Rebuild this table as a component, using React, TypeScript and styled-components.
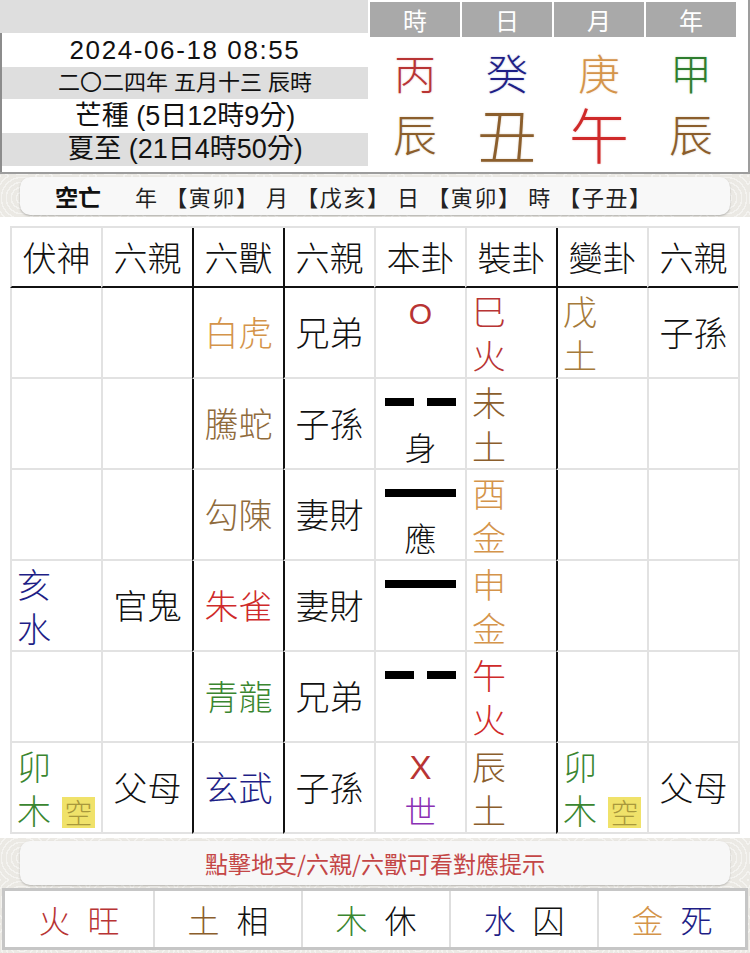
import React from "react";
import styled, { createGlobalStyle } from "styled-components";

const C = {
  fire: "#b83434",
  fireBright: "#cf2a2a",
  earth: "#8b5e2c",
  metal: "#d4944a",
  wood: "#3a8630",
  water: "#1e1e86",
  tan: "#8f6b3c",
  earth2: "#a57a3a",
  purple: "#8a30b4",
  ink: "#111",
};

const texture = `
  background-color: #ebe9e4;
  background-image:
    repeating-radial-gradient(circle at 22px 22px, rgba(255,255,255,0.45) 0 1.5px, transparent 1.5px 5px);
  background-size: 44px 44px;
`;

const GlobalStyle = createGlobalStyle`
  * { box-sizing: border-box; }
  html, body { margin: 0; padding: 0; }
  body {
    ${texture}
    font-family: "Liberation Sans", "Noto Sans CJK TC", sans-serif;
    color: ${C.ink};
  }
`;

const Page = styled.div`
  width: 750px;
  height: 953px;
  overflow: hidden;
  ${texture}
`;

/* ---------- top section ---------- */
const Top = styled.section`
  display: flex;
  height: 174px;
  background: #fff;
  border-bottom: 2px solid #9d9d9d;
`;

const DatePanel = styled.div`
  width: 368px;
  display: flex;
  flex-direction: column;
`;

const DateCap = styled.div`
  height: 33px;
  background: #dedede;
`;

const DateBody = styled.div`
  flex: 1;
  border-left: 2px solid #8c8c8c;
  display: flex;
  flex-direction: column;
`;

const DateRow = styled.div<{ $grey?: boolean; $h: number; $size: number; $ls?: number }>`
  height: ${(p) => p.$h}px;
  background: ${(p) => (p.$grey ? "#dedede" : "#fff")};
  display: flex;
  align-items: center;
  justify-content: center;
  font-size: ${(p) => p.$size}px;
  letter-spacing: ${(p) => p.$ls ?? 0}px;
  line-height: 1;
  color: #111;
  white-space: nowrap;
`;

const PillarPanel = styled.div`
  flex: 1;
  border-right: 2px solid #9d9d9d;
  padding: 2px 0 0 2px;
  display: flex;
  flex-direction: column;
`;

const PillarGrid = styled.div<{ $h: number; $mt?: number }>`
  display: grid;
  grid-template-columns: repeat(4, 90px);
  grid-template-rows: ${(p) => p.$h}px;
  column-gap: 2px;
  height: ${(p) => p.$h}px;
  margin-top: ${(p) => p.$mt ?? 0}px;
`;

const HeadCell = styled.div`
  background: #a9a9a9;
  color: #fff;
  font-family: "Noto Sans CJK TC", sans-serif;
  font-size: 24px;
  line-height: 1;
  display: flex;
  align-items: center;
  justify-content: center;
`;

const BigChar = styled.div<{ $color: string; $size: number }>`
  display: flex;
  align-items: center;
  justify-content: center;
  font-family: "Noto Sans CJK TC", sans-serif;
  font-weight: 300;
  font-size: ${(p) => p.$size}px;
  line-height: 1;
  color: ${(p) => p.$color};
  text-shadow: 0 0 2px ${(p) => p.$color}55;
`;

/* ---------- kongwang bar ---------- */
const BarWrap = styled.div<{ $pt: number; $pb: number }>`
  padding: ${(p) => p.$pt}px 20px ${(p) => p.$pb}px;
`;

const KongBar = styled.div`
  height: 38px;
  border-radius: 10px;
  background: #f8f8f8;
  box-shadow: 0 1px 2px rgba(0, 0, 0, 0.25);
  display: flex;
  align-items: center;
  padding-left: 35px;
  font-family: "Noto Sans CJK TC", sans-serif;
  font-size: 22px;
  color: #222;
  white-space: pre;
`;

const KongLabel = styled.span`
  font-weight: 700;
  font-size: 23px;
  color: #111;
  margin-right: 34px;
`;

const KongText = styled.span`
  letter-spacing: 1.6px;
`;

/* ---------- table ---------- */
const TableWrap = styled.div`
  background: #fff;
  padding: 9px 10px 4px 10px;
`;

const Grid = styled.div`
  display: grid;
  grid-template-columns: repeat(8, 91px);
  grid-template-rows: 60px repeat(6, 91px);
  border-top: 2px solid #e2e2e2;
  border-right: 2px solid #e2e2e2;
  font-family: "Noto Sans CJK TC", sans-serif;
  font-weight: 300;
`;

const Cell = styled.div<{ $dark?: boolean; $head?: boolean }>`
  border-left: 2px solid ${(p) => (p.$dark ? "#111" : "#e2e2e2")};
  border-bottom: 2px solid ${(p) => (p.$head ? "#111" : "#e2e2e2")};
  display: flex;
  align-items: center;
  justify-content: center;
  font-size: 34px;
  line-height: 1.2;
  color: #111;
  white-space: nowrap;
`;

const TextCell = styled(Cell)<{ $color?: string }>`
  color: ${(p) => p.$color ?? "#111"};
`;

const StackCell = styled(Cell)`
  justify-content: flex-start;
  padding-left: 5px;
  gap: 11px;
`;

const Stack = styled.div<{ $color: string }>`
  display: flex;
  flex-direction: column;
  gap: 8px;
  line-height: 36px;
  font-size: 34px;
  color: ${(p) => p.$color};
`;

const KongBadge = styled.span`
  align-self: flex-end;
  margin-bottom: 4px;
  width: 33px;
  height: 31px;
  background: #f0e26a;
  color: #a8983c;
  font-size: 28px;
  line-height: 31px;
  text-align: center;
`;

const YaoCell = styled(Cell)`
  display: grid;
  grid-template-rows: 45px 44px;
  justify-items: center;
  align-items: center;
`;

const Yao = styled.div`
  width: 71px;
  height: 8px;
  display: flex;
  justify-content: space-between;
`;

const YaoSeg = styled.span<{ $w: number }>`
  width: ${(p) => p.$w}px;
  height: 8px;
  background: #000;
`;

const Mark = styled.span<{ $color: string; $size: number }>`
  font-family: "Liberation Sans", sans-serif;
  font-size: ${(p) => p.$size}px;
  color: ${(p) => p.$color};
  line-height: 1;
`;

const YaoWord = styled.span<{ $color?: string }>`
  font-size: 32px;
  line-height: 1;
  color: ${(p) => p.$color ?? "#111"};
`;

/* ---------- tip & elements ---------- */
const TipBar = styled.div`
  height: 44px;
  border-radius: 10px;
  background: #f7f7f7;
  box-shadow: 0 1px 2px rgba(0, 0, 0, 0.22);
  display: flex;
  align-items: center;
  justify-content: center;
  font-family: "Noto Sans CJK TC", sans-serif;
  font-size: 23px;
  line-height: 1;
  color: #c44646;
`;

const ElementBar = styled.div`
  margin: 0 2px;
  height: 62px;
  border: 3px solid #c6c6c6;
  background: #fff;
  display: grid;
  grid-template-columns: repeat(5, 1fr);
  font-family: "Noto Sans CJK TC", sans-serif;
  font-weight: 300;
`;

const ElementCell = styled.div<{ $first?: boolean }>`
  border-left: ${(p) => (p.$first ? "none" : "2px solid #dedede")};
  display: flex;
  align-items: center;
  justify-content: center;
  gap: 17px;
  font-size: 32px;
  line-height: 1;
`;

const Tone = styled.span<{ $color: string }>`
  color: ${(p) => p.$color};
`;

/* ---------- data ---------- */
type Branch = { a: string; b: string; color: string; kong?: boolean };
type YaoInfo = { line?: "yin" | "yang"; mark?: { t: string; color: string; size: number }; word?: string; wordColor?: string };
type Row = {
  fu?: Branch;
  fuQin?: string;
  shou: [string, string];
  qin: string;
  ben: YaoInfo;
  zhuang: Branch;
  bian?: Branch;
  bianQin?: string;
};

const rows: Row[] = [
  {
    shou: ["白虎", C.metal],
    qin: "兄弟",
    ben: { mark: { t: "O", color: C.fire, size: 30 } },
    zhuang: { a: "巳", b: "火", color: C.fire },
    bian: { a: "戊", b: "土", color: C.earth2 },
    bianQin: "子孫",
  },
  { shou: ["騰蛇", C.tan], qin: "子孫", ben: { line: "yin", word: "身" }, zhuang: { a: "未", b: "土", color: C.earth } },
  { shou: ["勾陳", C.tan], qin: "妻財", ben: { line: "yang", word: "應" }, zhuang: { a: "酉", b: "金", color: C.metal } },
  {
    fu: { a: "亥", b: "水", color: C.water },
    fuQin: "官鬼",
    shou: ["朱雀", C.fireBright],
    qin: "妻財",
    ben: { line: "yang" },
    zhuang: { a: "申", b: "金", color: C.metal },
  },
  { shou: ["青龍", C.wood], qin: "兄弟", ben: { line: "yin" }, zhuang: { a: "午", b: "火", color: C.fireBright } },
  {
    fu: { a: "卯", b: "木", color: C.wood, kong: true },
    fuQin: "父母",
    shou: ["玄武", C.water],
    qin: "子孫",
    ben: { mark: { t: "X", color: C.fire, size: 33 }, word: "世", wordColor: C.purple },
    zhuang: { a: "辰", b: "土", color: C.earth },
    bian: { a: "卯", b: "木", color: C.wood, kong: true },
    bianQin: "父母",
  },
];

const heads = ["伏神", "六親", "六獸", "六親", "本卦", "裝卦", "變卦", "六親"];
const darkCols = [2, 3, 6];

const BranchCell: React.FC<{ b?: Branch; dark?: boolean }> = ({ b, dark }) => (
  <StackCell $dark={dark}>
    {b && (
      <>
        <Stack $color={b.color}>
          <span>{b.a}</span>
          <span>{b.b}</span>
        </Stack>
        {b.kong && <KongBadge>空</KongBadge>}
      </>
    )}
  </StackCell>
);

const YaoLine: React.FC<{ kind: "yin" | "yang" }> = ({ kind }) =>
  kind === "yang" ? (
    <Yao>
      <YaoSeg $w={71} />
    </Yao>
  ) : (
    <Yao>
      <YaoSeg $w={29} />
      <YaoSeg $w={29} />
    </Yao>
  );

const stems = [
  { t: "丙", c: C.fire },
  { t: "癸", c: C.water },
  { t: "庚", c: C.metal },
  { t: "甲", c: "#2e7d2e" },
];
const branches = [
  { t: "辰", c: C.earth, s: 44 },
  { t: "丑", c: C.earth, s: 60 },
  { t: "午", c: C.fireBright, s: 60 },
  { t: "辰", c: C.earth, s: 44 },
];

const elements = [
  { e: "火", ec: C.fire, s: "旺", sc: C.fire },
  { e: "土", ec: C.earth, s: "相", sc: "#111" },
  { e: "木", ec: C.wood, s: "休", sc: "#111" },
  { e: "水", ec: C.water, s: "囚", sc: "#111" },
  { e: "金", ec: C.metal, s: "死", sc: C.water },
];

export default function App() {
  return (
    <Page>
      <GlobalStyle />
      <Top>
        <DatePanel>
          <DateCap />
          <DateBody>
            <DateRow $h={34} $size={26} $ls={1.6}>
              2024-06-18 08:55
            </DateRow>
            <DateRow $h={32} $size={22} $grey>
              二〇二四年 五月十三 辰時
            </DateRow>
            <DateRow $h={34} $size={27}>芒種 (5日12時9分)</DateRow>
            <DateRow $h={33} $size={27} $grey>
              夏至 (21日4時50分)
            </DateRow>
          </DateBody>
        </DatePanel>
        <PillarPanel>
          <PillarGrid $h={35}>
            {["時", "日", "月", "年"].map((h) => (
              <HeadCell key={h}>{h}</HeadCell>
            ))}
          </PillarGrid>
          <PillarGrid $h={60} $mt={5}>
            {stems.map((s) => (
              <BigChar key={s.t} $color={s.c} $size={42}>
                {s.t}
              </BigChar>
            ))}
          </PillarGrid>
          <PillarGrid $h={62}>
            {branches.map((b, i) => (
              <BigChar key={i} $color={b.c} $size={b.s}>
                {b.t}
              </BigChar>
            ))}
          </PillarGrid>
        </PillarPanel>
      </Top>

      <BarWrap $pt={3} $pb={2}>
        <KongBar>
          <KongLabel>空亡</KongLabel>
          <KongText>年 【寅卯】 月 【戊亥】 日 【寅卯】 時 【子丑】</KongText>
        </KongBar>
      </BarWrap>

      <TableWrap>
        <Grid>
          {heads.map((h, i) => (
            <Cell key={i} $head $dark={darkCols.includes(i)}>
              {h}
            </Cell>
          ))}
          {rows.map((r, i) => (
            <React.Fragment key={i}>
              <BranchCell b={r.fu} />
              <TextCell>{r.fuQin ?? ""}</TextCell>
              <TextCell $dark $color={r.shou[1]}>
                {r.shou[0]}
              </TextCell>
              <TextCell $dark>{r.qin}</TextCell>
              <YaoCell>
                <span>
                  {r.ben.line && <YaoLine kind={r.ben.line} />}
                  {r.ben.mark && (
                    <Mark $color={r.ben.mark.color} $size={r.ben.mark.size}>
                      {r.ben.mark.t}
                    </Mark>
                  )}
                </span>
                <YaoWord $color={r.ben.wordColor}>{r.ben.word ?? ""}</YaoWord>
              </YaoCell>
              <BranchCell b={r.zhuang} />
              <BranchCell b={r.bian} dark />
              <TextCell>{r.bianQin ?? ""}</TextCell>
            </React.Fragment>
          ))}
        </Grid>
      </TableWrap>

      <BarWrap $pt={3} $pb={3}>
        <TipBar>點擊地支/六親/六獸可看對應提示</TipBar>
      </BarWrap>

      <ElementBar>
        {elements.map((el, i) => (
          <ElementCell key={el.e} $first={i === 0}>
            <Tone $color={el.ec}>{el.e}</Tone>
            <Tone $color={el.sc}>{el.s}</Tone>
          </ElementCell>
        ))}
      </ElementBar>
    </Page>
  );
}
